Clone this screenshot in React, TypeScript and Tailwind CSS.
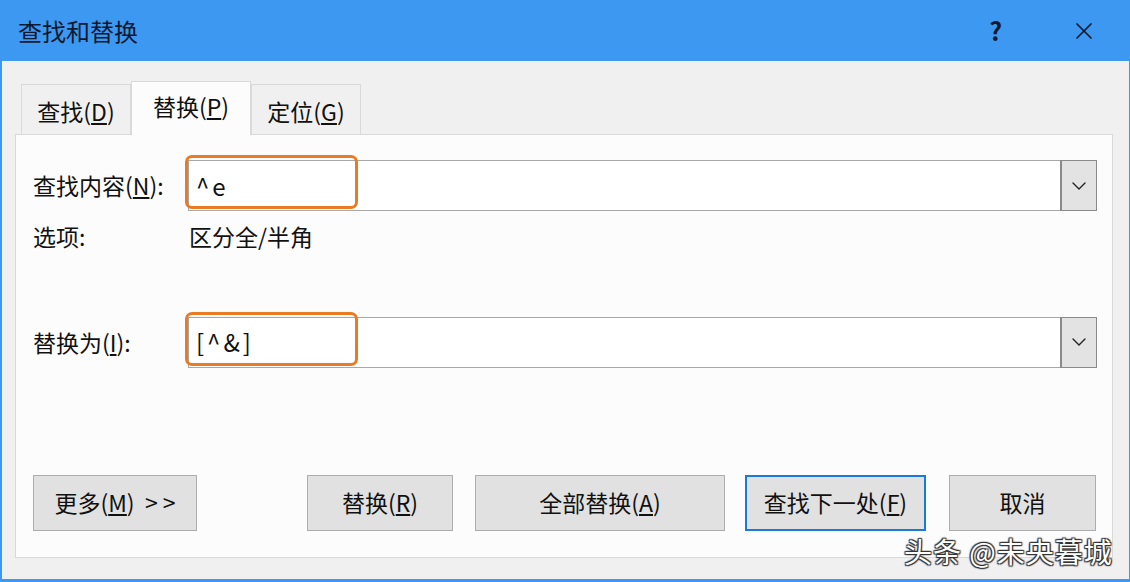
import { ChevronDown, X } from "lucide-react";

const font = { fontFamily: '"Microsoft YaHei", "Noto Sans CJK SC", "Noto Sans", sans-serif' };

const Tab = ({ label, k, active }: { label: string; k: string; active?: boolean }) => (
  <div
    className={
      active
        ? "relative z-10 -mb-px flex h-[54px] w-[120px] items-center justify-center border border-b-0 border-[#d9d9d9] bg-[#fcfcfc] pb-1 text-[23px] text-[#111]"
        : "mt-[3px] flex h-[50px] w-[110px] items-center justify-center border border-b-0 border-[#d9d9d9] bg-[#f0f0f0] pt-1 text-[23px] text-[#111]"
    }
  >
    {label}(<span className="underline underline-offset-2">{k}</span>)
  </div>
);

const Combo = ({ value }: { value: string }) => (
  <div className="relative flex h-[51px] w-[909px] border border-[#a8a8a8] bg-white">
    <div className="flex flex-1 items-center pl-[7px] text-[24px] tracking-[3px] text-[#111]">{value}</div>
    <div className="flex w-[35px] items-center justify-center border-l border-[#8a8a8a] bg-[#e3e3e3] outline outline-1 outline-[#8a8a8a]">
      <ChevronDown className="h-6 w-6 text-[#222]" strokeWidth={1.4} />
    </div>
    <div className="absolute left-[-4px] top-[-6px] h-[54px] w-[173px] rounded-[7px] border-[3px] border-[#ea7b22]" />
  </div>
);

const Btn = ({ children, w, focus }: { children: React.ReactNode; w: string; focus?: boolean }) => (
  <div
    className={`flex h-[56px] ${w} items-center justify-center bg-[#e1e1e1] text-[23px] text-[#111] ${
      focus ? "border-2 border-[#1a7ad6]" : "border border-[#adadad]"
    }`}
  >
    {children}
  </div>
);

export default function App() {
  return (
    <div className="relative h-[582px] w-[1130px] overflow-hidden bg-[#3d98f2]" style={font}>
      <div className="flex h-[61px] items-center px-[18px]">
        <div className="flex-1 text-[24px] text-[#0d1a2e]">查找和替换</div>
        <div className="mr-[68px] text-[25px] font-bold text-[#0d1a2e]">?</div>
        <X className="mr-[14px] h-[28px] w-[28px] text-[#0d1a2e]" strokeWidth={1.5} />
      </div>

      <div className="ml-[2px] mr-[1px] flex h-[518px] flex-col bg-[#f0f0f0] pl-[13px] pr-[16px] pt-[20px]">
        <div className="flex pl-[6px]">
          <Tab label="查找" k="D" />
          <Tab label="替换" k="P" active />
          <Tab label="定位" k="G" />
        </div>

        <div className="flex h-[424px] flex-col border border-[#d9d9d9] bg-[#fcfcfc] pl-[17px] pr-[14px] pt-[25px]">
          <div className="flex items-center">
            <div className="w-[155px] text-[23px] text-[#111]">
              查找内容(<span className="underline underline-offset-2">N</span>):
            </div>
            <Combo value="^e" />
          </div>

          <div className="mt-[8px] flex items-center text-[23px] text-[#111]">
            <div className="w-[156px]">选项:</div>
            <div>区分全/半角</div>
          </div>

          <div className="mt-[63px] flex items-center">
            <div className="w-[155px] text-[23px] text-[#111]">
              替换为(<span className="underline underline-offset-2">I</span>):
            </div>
            <Combo value="[^&]" />
          </div>

          <div className="mt-[107px] flex items-center">
            <Btn w="w-[164px]">
              <span>
                更多(<span className="underline underline-offset-2">M</span>)&nbsp;&nbsp;&gt; &gt;
              </span>
            </Btn>
            <div className="w-[110px]" />
            <Btn w="w-[146px]">
              <span>
                替换(<span className="underline underline-offset-2">R</span>)
              </span>
            </Btn>
            <div className="w-[22px]" />
            <Btn w="w-[250px]">
              <span>
                全部替换(<span className="underline underline-offset-2">A</span>)
              </span>
            </Btn>
            <div className="w-[20px]" />
            <Btn w="w-[181px]" focus>
              <span>
                查找下一处(<span className="underline underline-offset-2">F</span>)
              </span>
            </Btn>
            <div className="w-[23px]" />
            <Btn w="w-[147px]">取消</Btn>
          </div>
        </div>
      </div>

      <div
        className="absolute left-[904px] top-[530px] text-[28px] tracking-[1px] text-white"
        style={{ textShadow: "0 0 2px #333, 1px 1px 1px #333, -1px -1px 1px #333, 1px -1px 1px #333, -1px 1px 1px #333" }}
      >
        头条 @未央暮城
      </div>
    </div>
  );
}
